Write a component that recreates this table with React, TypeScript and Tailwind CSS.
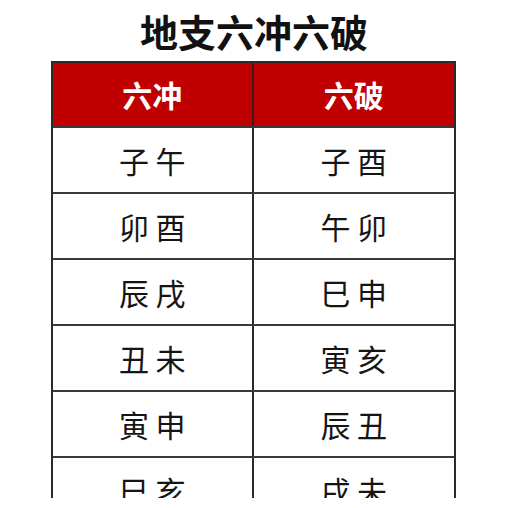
import React from 'react';

const rows = [
  ['子 午', '子 酉'],
  ['卯 酉', '午 卯'],
  ['辰 戌', '巳 申'],
  ['丑 未', '寅 亥'],
  ['寅 申', '辰 丑'],
  ['巳 亥', '戌 未'],
];

const font = { fontFamily: '"Noto Sans CJK SC", "Noto Sans", sans-serif' };

export default function App() {
  return (
    <div className="w-[506px] h-[508px] bg-white" style={font}>
      <div className="h-[498px] overflow-hidden">
        <div className="h-[61px] flex items-center justify-center pl-[2px]">
          <h1 className="text-[38px] font-bold leading-none text-[#111] tracking-[0px]">地支六冲六破</h1>
        </div>
        <div className="ml-[51px] w-[405px] border-2 border-[#2b2b2b]">
          <div className="grid grid-cols-2 h-[63px] bg-[#c00000] text-white">
            <div className="flex items-center justify-center text-[30px] font-bold border-r-2 border-[#3a1a1a]">六冲</div>
            <div className="flex items-center justify-center text-[30px] font-bold">六破</div>
          </div>
          {rows.map((r, i) => (
            <div key={i} className="grid grid-cols-2 h-[66px] border-t-2 border-[#3a3a3a] text-[#151515]">
              <div className="flex items-center justify-center text-[30px] border-r-2 border-[#2b2b2b]">{r[0]}</div>
              <div className="flex items-center justify-center text-[30px]">{r[1]}</div>
            </div>
          ))}
        </div>
      </div>
    </div>
  );
}
